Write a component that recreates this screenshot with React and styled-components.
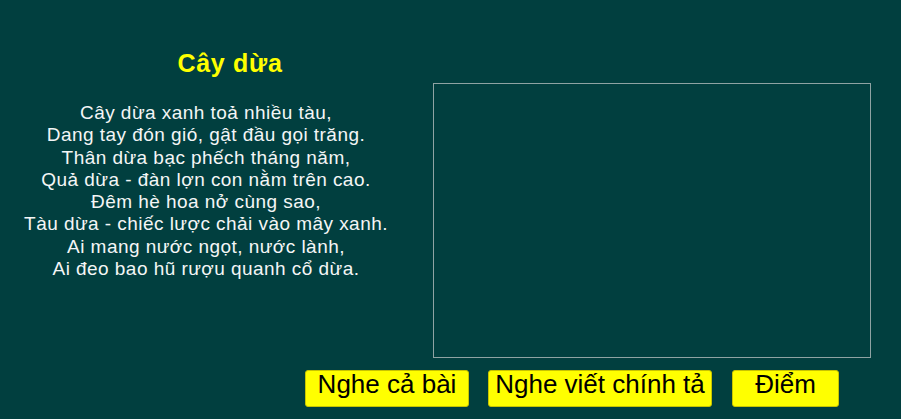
import React from "react";
import styled, { createGlobalStyle } from "styled-components";

const GlobalStyle = createGlobalStyle`
  html, body {
    margin: 0;
    padding: 0;
    background: #013f3f;
  }
  body {
    font-family: "Liberation Sans", Arial, sans-serif;
  }
`;

const Page = styled.div`
  width: 901px;
  height: 419px;
  background: #013f3f;
  display: flex;
  flex-direction: column;
  overflow: hidden;
`;

const Main = styled.div`
  display: flex;
  align-items: flex-start;
`;

const PoemColumn = styled.div`
  width: 433px;
  padding-top: 49px;
  display: flex;
  flex-direction: column;
`;

const Title = styled.h1`
  margin: 0;
  width: 460px;
  text-align: center;
  color: #ffff00;
  font-size: 25px;
  letter-spacing: 0.7px;
  font-weight: bold;
  line-height: 28px;
`;

const Poem = styled.div`
  margin-top: 25px;
  width: 412px;
  text-align: center;
  color: #f4f6f6;
  font-size: 19px;
  letter-spacing: 0.45px;
  line-height: 22.3px;
  white-space: pre-line;
`;

const Writing = styled.textarea`
  margin-top: 83px;
  width: 438px;
  height: 275px;
  box-sizing: border-box;
  border: 1px solid #8fa3a3;
  background: transparent;
  color: #ffffff;
  font-family: "Liberation Sans", Arial, sans-serif;
  font-size: 18px;
  resize: none;
  outline: none;
`;

const Toolbar = styled.div`
  display: flex;
  padding-left: 305px;
  margin-top: 12px;
`;

const Button = styled.button`
  width: ${(p) => p.$w}px;
  margin-left: ${(p) => p.$gap || 0}px;
  height: 37px;
  box-sizing: border-box;
  padding: 0 0 8px;
  background: #ffff00;
  border: 1px solid #c9c400;
  border-radius: 3px;
  color: #000;
  font-family: "Liberation Sans", Arial, sans-serif;
  font-size: 26px;
  line-height: 27px;
  text-align: center;
  white-space: nowrap;
  cursor: pointer;
`;

const lines = [
  "Cây dừa xanh toả nhiều tàu,",
  "Dang tay đón gió, gật đầu gọi trăng.",
  "Thân dừa bạc phếch tháng năm,",
  "Quả dừa - đàn lợn con nằm trên cao.",
  "Đêm hè hoa nở cùng sao,",
  "Tàu dừa - chiếc lược chải vào mây xanh.",
  "Ai mang nước ngọt, nước lành,",
  "Ai đeo bao hũ rượu quanh cổ dừa.",
];

export default function App() {
  return (
    <Page>
      <GlobalStyle />
      <Main>
        <PoemColumn>
          <Title>Cây dừa</Title>
          <Poem>{lines.join("\n")}</Poem>
        </PoemColumn>
        <Writing spellCheck={false} />
      </Main>
      <Toolbar>
        <Button $w={164}>Nghe cả bài</Button>
        <Button $w={224} $gap={19}>Nghe viết chính tả</Button>
        <Button $w={107} $gap={20}>Điểm</Button>
      </Toolbar>
    </Page>
  );
}
